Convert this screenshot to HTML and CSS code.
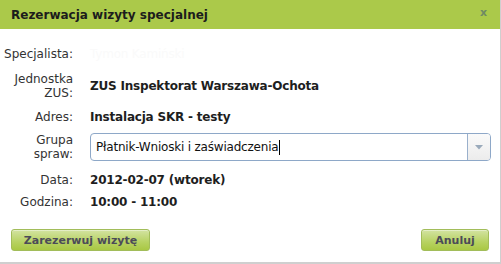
FILE: index.html
```html
<!DOCTYPE html>
<html lang="pl">
<head>
<meta charset="utf-8">
<link rel="stylesheet" href="styles.css">
</head>
<body>
<div class="dialog">
  <div class="titlebar">
    <span class="title">Rezerwacja wizyty specjalnej</span>
    <span class="close">x</span>
  </div>
  <div class="content">
    <div class="form">
      <div class="label">Specjalista:</div>
      <div class="value faint">Tymon Kamiński</div>

      <div class="label">Jednostka<br>ZUS:</div>
      <div class="value">ZUS Inspektorat Warszawa-Ochota</div>

      <div class="label">Adres:</div>
      <div class="value">Instalacja SKR - testy</div>

      <div class="label">Grupa<br>spraw:</div>
      <div class="value">
        <div class="select">
          <div class="select-text">Płatnik-Wnioski i zaświadczenia<span class="caret"></span></div>
          <div class="select-btn">
            <svg width="8" height="5" viewBox="0 0 8 5"><path d="M0 0H8L4 4.5Z" fill="#9aaabb"/></svg>
          </div>
        </div>
      </div>

      <div class="label">Data:</div>
      <div class="value">2012-02-07 (wtorek)</div>

      <div class="label">Godzina:</div>
      <div class="value">10:00 - 11:00</div>
    </div>
    <div class="footer">
      <button class="btn btn-wide">Zarezerwuj wizytę</button>
      <button class="btn btn-cancel">Anuluj</button>
    </div>
  </div>
</div>
</body>
</html>
```

FILE: styles.css
```css
html {
  background: #cfcfcf;
}
body {
  margin: 0;
  width: 501px;
  height: 264px;
  background: #cfcfcf;
  font-family: "DejaVu Sans", Verdana, sans-serif;
  font-size: 12px;
}
.dialog {
  width: 500px;
  height: 262px;
  background: #ffffff;
  display: flex;
  flex-direction: column;
}
.titlebar {
  height: 29px;
  background: #abc94a;
  display: flex;
  align-items: center;
  justify-content: space-between;
  padding: 0 13px 0 11px;
  box-sizing: border-box;
}
.title {
  font-weight: bold;
  font-size: 12px;
  color: #1c1c1c;
  padding-top: 1px;
}
.close {
  font-weight: bold;
  font-size: 11px;
  color: #6f8a64;
  margin-top: -5px;
}
.content {
  padding-top: 11px;
  display: flex;
  flex-direction: column;
}
.form {
  display: grid;
  grid-template-columns: 73px 1fr;
  grid-template-rows: 28px 36px 26px 34px 31px 14px;
  column-gap: 17px;
  align-items: center;
  padding-right: 9px;
}
.label {
  text-align: right;
  color: #333333;
  line-height: 14px;
}
.value {
  font-weight: bold;
  color: #1e1e1e;
  line-height: 14px;
  letter-spacing: -0.2px;
}
.faint {
  color: #fafafa;
  font-weight: normal;
}
.select {
  height: 28px;
  box-sizing: border-box;
  border: 1px solid #8ea8c8;
  border-radius: 4px;
  display: flex;
  background: #fff;
  font-weight: normal;
}
.select-text {
  flex: 1;
  display: flex;
  align-items: center;
  padding-left: 5px;
  color: #111;
  letter-spacing: -0.2px;
}
.caret {
  display: inline-block;
  width: 1px;
  height: 15px;
  background: #000;
  margin-left: 1px;
}
.select-btn {
  width: 22px;
  border-left: 1px solid #9ab0cc;
  background: linear-gradient(#fafafa, #ececec);
  border-radius: 0 3px 3px 0;
  display: flex;
  align-items: center;
  justify-content: center;
}
.footer {
  display: flex;
  justify-content: space-between;
  padding: 20px 11px 0 11px;
}
.btn {
  height: 22px;
  border: 1px solid #a2bd5a;
  border-radius: 3px;
  background: linear-gradient(#d3e3a2, #b7d262 60%, #a9c844);
  font-family: "DejaVu Sans", Verdana, sans-serif;
  font-weight: bold;
  font-size: 11px;
  color: #4b4b58;
  padding: 0;
  box-shadow: inset 0 1px 0 rgba(255,255,255,0.4);
}
.btn-wide {
  width: 139px;
}
.btn-cancel {
  width: 68px;
}
```
